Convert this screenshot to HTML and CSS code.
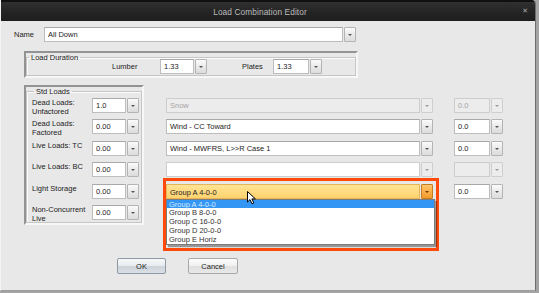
FILE: index.html
```html
<!DOCTYPE html>
<html lang="en">
<head>
    <meta charset="UTF-8">
    <title>Load Combination Editor</title>
    <link rel="stylesheet" href="styles.css">
</head>
<body>
    <div class="dialog">
        <div class="titlebar">
            <span class="title">Load Combination Editor</span>
            <span class="close">&#x2715;</span>
        </div>

        <div class="content">
            <div class="name-row">
                <label class="name-label">Name</label>
                <div class="combo name-combo">
                    <div class="field">All Down</div>
                    <div class="btn"></div>
                </div>
            </div>

            <div class="frame duration-frame">
                <fieldset class="group">
                    <legend>Load Duration</legend>
                    <div class="duration-row">
                        <span class="dur-label">Lumber</span>
                        <div class="combo dur-combo">
                            <div class="field">1.33</div>
                            <div class="btn"></div>
                        </div>
                        <span class="dur-label plates">Plates</span>
                        <div class="combo dur-combo">
                            <div class="field">1.33</div>
                            <div class="btn"></div>
                        </div>
                    </div>
                </fieldset>
            </div>

            <div class="main">
                <div class="frame std-frame">
                    <fieldset class="group">
                        <legend>Std Loads</legend>
                        <div class="std-row">
                            <span class="std-label">Dead Loads:<br>Unfactored</span>
                            <div class="combo std-combo"><div class="field">1.0</div><div class="btn"></div></div>
                        </div>
                        <div class="std-row">
                            <span class="std-label">Dead Loads:<br>Factored</span>
                            <div class="combo std-combo"><div class="field">0.00</div><div class="btn"></div></div>
                        </div>
                        <div class="std-row">
                            <span class="std-label">Live Loads: TC</span>
                            <div class="combo std-combo"><div class="field">0.00</div><div class="btn"></div></div>
                        </div>
                        <div class="std-row">
                            <span class="std-label">Live Loads: BC</span>
                            <div class="combo std-combo"><div class="field">0.00</div><div class="btn"></div></div>
                        </div>
                        <div class="std-row">
                            <span class="std-label">Light Storage</span>
                            <div class="combo std-combo"><div class="field">0.00</div><div class="btn"></div></div>
                        </div>
                        <div class="std-row">
                            <span class="std-label">Non-Concurrent<br>Live</span>
                            <div class="combo std-combo"><div class="field">0.00</div><div class="btn"></div></div>
                        </div>
                    </fieldset>
                </div>

                <div class="extra">
                    <div class="extra-row">
                        <div class="combo wide disabled"><div class="field">Snow</div><div class="btn"></div></div>
                        <div class="combo small disabled"><div class="field">0.0</div><div class="btn"></div></div>
                    </div>
                    <div class="extra-row">
                        <div class="combo wide"><div class="field">Wind - CC Toward</div><div class="btn"></div></div>
                        <div class="combo small"><div class="field">0.0</div><div class="btn"></div></div>
                    </div>
                    <div class="extra-row">
                        <div class="combo wide"><div class="field">Wind - MWFRS, L&gt;&gt;R Case 1</div><div class="btn"></div></div>
                        <div class="combo small"><div class="field">0.0</div><div class="btn"></div></div>
                    </div>
                    <div class="extra-row">
                        <div class="combo wide blank"><div class="field"></div><div class="btn"></div></div>
                        <div class="combo small disabled"><div class="field"></div><div class="btn"></div></div>
                    </div>
                    <div class="extra-row">
                        <div class="combo wide active">
                            <div class="field">Group A 4-0-0</div>
                            <div class="btn"></div>
                            <div class="ring"></div>
                            <ul class="droplist">
                                <li class="selected">Group A 4-0-0</li>
                                <li>Group B 8-0-0</li>
                                <li>Group C 16-0-0</li>
                                <li>Group D 20-0-0</li>
                                <li>Group E Horiz</li>
                            </ul>
                            <svg class="cursor" width="10" height="14" viewBox="0 0 10 14">
                                <path d="M0.5 0.5 L0.5 11 L3 8.6 L5 12.8 L6.8 12 L4.9 7.9 L8.4 7.9 Z" fill="#fff" stroke="#000" stroke-width="1" stroke-linejoin="round"/>
                            </svg>
                        </div>
                        <div class="combo small"><div class="field">0.0</div><div class="btn"></div></div>
                    </div>
                </div>
            </div>

            <div class="buttons">
                <button class="default">OK</button>
                <button>Cancel</button>
            </div>
        </div>
    </div>
</body>
</html>
```

FILE: styles.css
```css
body {
    margin: 0;
    width: 539px;
    height: 293px;
    background: #a4a4a4;
    font-family: "Liberation Sans", Arial, sans-serif;
    font-size: 7.5px;
    color: #222;
    overflow: hidden;
}
.dialog {
    width: 534px;
    height: 290px;
    background: #e8e8e8;
    border-left: 1px solid #f4f4f4;
    border-right: 1px solid #6e6e6e;
    border-bottom: 1px solid #9c9c9c;
    border-top-right-radius: 4px;
    overflow: hidden;
}
.titlebar {
    height: 19px;
    border-top: 2px solid #101010;
    background: linear-gradient(#303030, #232323 60%, #1e1e1e);
    display: flex;
    align-items: center;
    justify-content: center;
    padding-right: 16px;
    position: relative;
}
.title {
    color: #bcbcbc;
    font-size: 8.3px;
    letter-spacing: 0.1px;
}
.close {
    position: absolute;
    right: 7px;
    top: 5px;
    color: #a8a8a8;
    font-size: 7px;
    font-family: "DejaVu Sans", sans-serif;
}
.content {
    padding: 6px 0 0 12px;
}

/* combo boxes */
.combo {
    display: flex;
    height: 15px;
    position: relative;
}
.combo .field {
    flex: 1;
    background: #fff;
    border: 1px solid #bdbdbd;
    border-top-color: #a9a9a9;
    line-height: 13px;
    padding-left: 3px;
    white-space: nowrap;
    overflow: hidden;
}
.combo .btn {
    width: 10px;
    margin-left: 1px;
    border: 1px solid #b4b4b4;
    border-radius: 1px;
    background: linear-gradient(#fbfbfb, #e8e8e8 55%, #dcdcdc);
    position: relative;
}
.combo .btn::after {
    content: "";
    position: absolute;
    left: 3px;
    top: 6px;
    border-left: 2px solid transparent;
    border-right: 2px solid transparent;
    border-top: 2px solid #555;
}
.combo.disabled .field {
    background: #ececec;
    border-color: #cdcdcd;
    color: #a6a6a6;
}
.combo.disabled .btn,
.combo.blank .btn {
    border-color: #cfcfcf;
    background: #ececec;
}
.combo.disabled .btn::after,
.combo.blank .btn::after {
    border-top-color: #9a9a9a;
}
.combo.blank .field {
    border-color: #cdcdcd;
}
.combo.active .field {
    background: linear-gradient(#ffe394, #ffd36e);
    border-color: #e8b458;
    padding-top: 1px;
}
.combo.active .btn {
    background: linear-gradient(#ffc66a, #f39a2c);
    border-color: #c67c22;
}
.combo.active .btn::after {
    border-top-color: #6a3a00;
}

/* name row */
.name-row {
    display: flex;
    align-items: center;
}
.name-label {
    width: 30px;
    padding-left: 1px;
}
.name-combo {
    width: 312px;
}

/* group frames */
.frame {
    border: 2px solid;
    border-color: #939393 #f7f7f7 #f7f7f7 #939393;
    box-sizing: border-box;
}
.group {
    margin: 0;
    padding: 0;
    border: 1px solid #c6c6c6;
    box-shadow: inset 1px 1px 0 #fafafa;
    height: 100%;
    box-sizing: border-box;
}
.group legend {
    padding: 0 2px;
    margin-left: 2px;
    line-height: 9px;
}
.duration-frame {
    margin: 9px 0 0 11px;
    width: 334px;
    height: 27px;
}
.duration-row {
    display: flex;
    align-items: center;
    margin: -3px 0 0 85px;
}
.dur-label {
    width: 48px;
}
.dur-label.plates {
    width: 31px;
    margin-left: 35px;
}
.dur-combo {
    width: 47px;
}
.dur-combo + .dur-label + .dur-combo {
    width: 49px;
}

/* main area */
.main {
    display: flex;
    margin-top: 7px;
}
.std-frame {
    margin-left: 11px;
    width: 120px;
    height: 140px;
}
.std-frame .group {
    padding: 0 2px 0 5px;
}
.std-row {
    display: flex;
    align-items: flex-start;
    height: 15px;
    margin-top: 6.4px;
}
.std-row:first-of-type {
    margin-top: 2px;
}
.std-label {
    width: 60px;
    line-height: 8.6px;
    padding-top: 1px;
    white-space: nowrap;
}
.std-combo {
    width: 47px;
}
.extra {
    margin-left: 22px;
    padding-top: 13px;
    display: flex;
    flex-direction: column;
    gap: 6.4px;
}
.extra-row {
    display: flex;
    gap: 21px;
}
.combo.wide {
    width: 267px;
}
.combo.small {
    width: 49px;
}

/* open dropdown + annotation */
.ring {
    position: absolute;
    left: -3px;
    top: -6px;
    right: -6px;
    height: 73px;
    border: 3px solid #ff4a0c;
    box-sizing: border-box;
}
.droplist {
    position: absolute;
    left: 0;
    top: 15px;
    width: 269px;
    height: 46px;
    margin: 0;
    padding: 0;
    list-style: none;
    background: #fff;
    border: 1px solid #7c7c7c;
    box-sizing: border-box;
    box-shadow: 2px 2px 1px rgba(0, 0, 0, 0.35);
}
.droplist li {
    height: 8.8px;
    line-height: 9px;
    padding-left: 2px;
    color: #333;
}
.droplist li.selected {
    background: #3396f4;
    color: #d6ebff;
}
.cursor {
    position: absolute;
    left: 81px;
    top: 7px;
}

/* buttons */
.buttons {
    display: flex;
    gap: 22px;
    margin: 33px 0 0 104px;
}
.buttons button {
    width: 50px;
    height: 16px;
    padding: 0;
    font-family: inherit;
    font-size: 7.5px;
    color: #222;
    border: 1px solid #a8a8a8;
    border-radius: 2px;
    background: linear-gradient(#fcfcfc, #f0f0f0 48%, #e0e0e0 52%, #e8e8e8);
}
.buttons button.default {
    width: 49px;
    border-color: #8e99a6;
    background: linear-gradient(#f6f7f9, #e8ebee 48%, #cdd3da 52%, #dadfe4);
}
```
